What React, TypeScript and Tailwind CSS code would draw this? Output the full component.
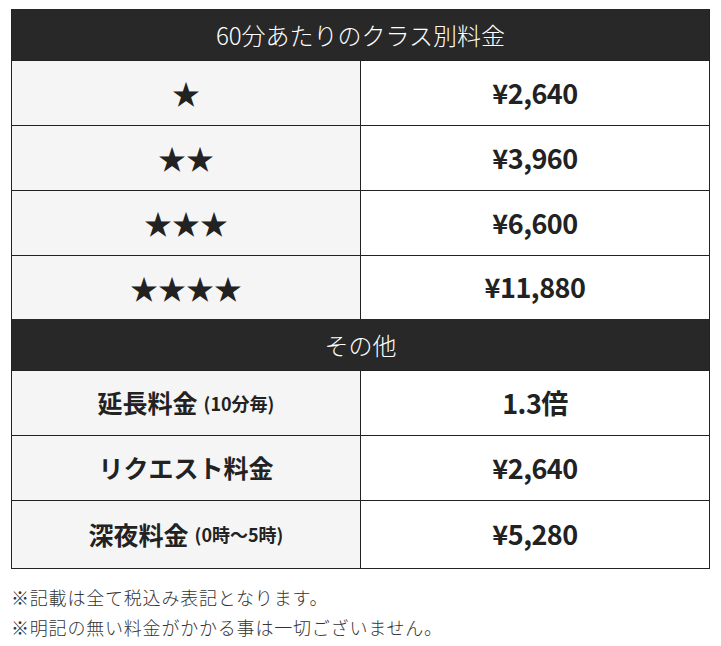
const font = { fontFamily: '"Noto Sans CJK JP", "Noto Sans", sans-serif' };

const classRows = [
  { label: "★", price: "¥2,640" },
  { label: "★★", price: "¥3,960" },
  { label: "★★★", price: "¥6,600" },
  { label: "★★★★", price: "¥11,880" },
];

const otherRows = [
  { label: "延長料金", note: "(10分毎)", price: "1.3倍" },
  { label: "リクエスト料金", note: "", price: "¥2,640" },
  { label: "深夜料金", note: "(0時〜5時)", price: "¥5,280" },
];

function Head({ title }: { title: string }) {
  return (
    <div className="h-[52px] bg-[#282828] text-white flex items-center justify-center text-[24px] font-light border-b border-[#222]">
      {title}
    </div>
  );
}

export default function App() {
  return (
    <div className="bg-white w-[721px] h-[646px] pt-[9px] pl-[11px]" style={font}>
      <div className="w-[699px] border-l border-r border-b border-[#222] text-[#222]">
        <Head title="60分あたりのクラス別料金" />
        {classRows.map((r, i) => (
          <div key={i} className={"grid grid-cols-[349px_1fr] " + (i === 3 ? "h-[63px]" : "h-[65px] border-b border-[#222]")}>
            <div className="bg-[#f5f5f5] border-r border-[#222] flex items-center justify-center text-[28px]">
              {r.label}
            </div>
            <div className="flex items-center justify-center text-[27px] font-bold tracking-[-0.5px]">{r.price}</div>
          </div>
        ))}
        <Head title="その他" />
        {otherRows.map((r, i) => (
          <div key={i} className={"grid grid-cols-[349px_1fr] " + (i === 2 ? "h-[67px]" : "h-[65px] border-b border-[#222]")}>
            <div className="bg-[#f5f5f5] border-r border-[#222] flex items-center justify-center">
              <span className="text-[25px] font-bold">{r.label}</span>
              {r.note && <span className="text-[18px] font-bold ml-[6px]">{r.note}</span>}
            </div>
            <div className="flex items-center justify-center text-[27px] font-bold tracking-[-0.5px]">{r.price}</div>
          </div>
        ))}
      </div>
      <div className="mt-[13px] text-[18px] leading-[30px] text-[#333] font-light tracking-[0.8px]">
        <p>※記載は全て税込み表記となります。</p>
        <p>※明記の無い料金がかかる事は一切ございません。</p>
      </div>
    </div>
  );
}
